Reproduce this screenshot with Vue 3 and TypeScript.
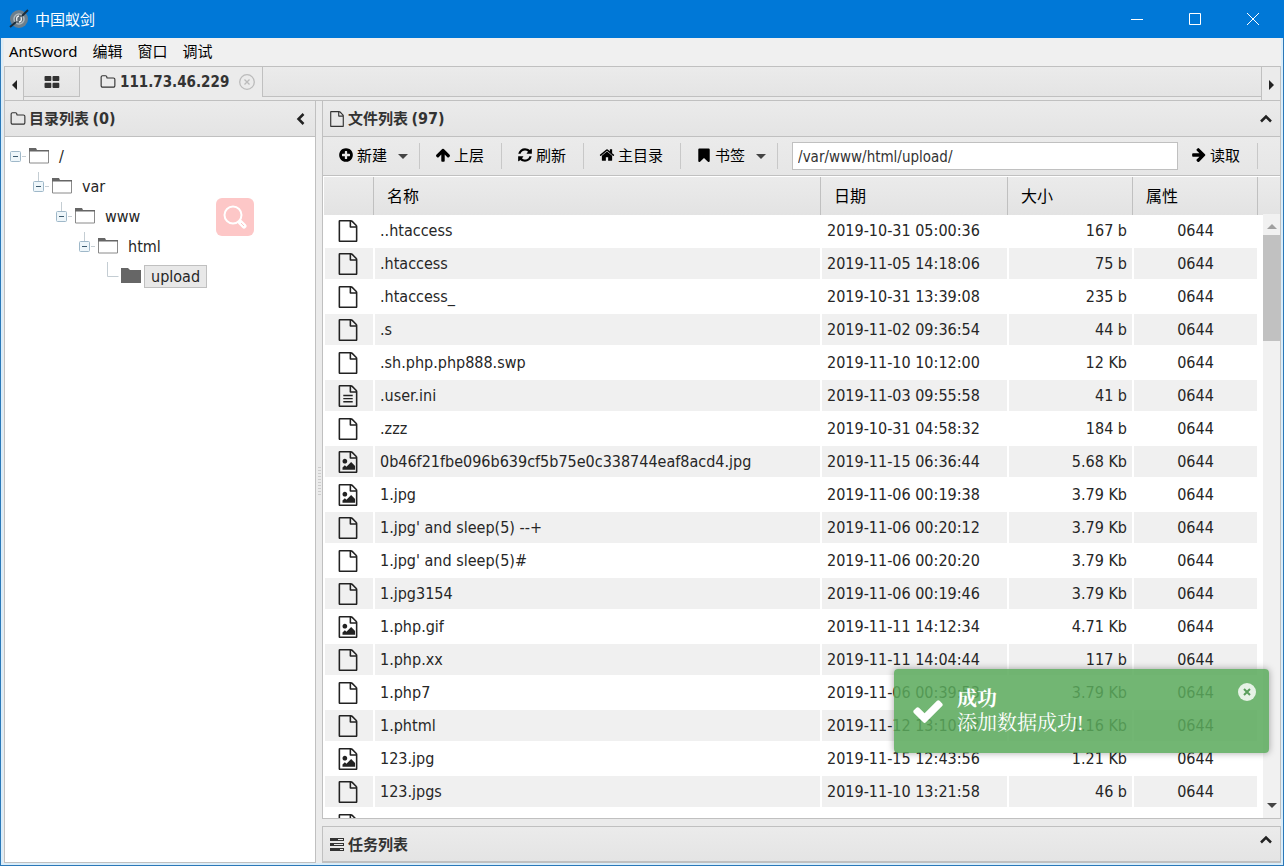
<script setup lang="ts">
import { ref } from 'vue'

type Kind = 'file' | 'text' | 'image'
interface Entry { name: string; date: string; size: string; kind: Kind }

const fileShape = 'M1596 380q28 28 48 76t20 88v1152q0 40-28 68t-68 28h-1344q-40 0-68-28t-28-68v-1600q0-40 28-68t68-28h896q40 0 88 20t76 48zm-444-244v376h376q-10-29-22-41l-313-313q-12-12-41-22zm384 1528v-1024h-416q-40 0-68-28t-28-68v-416h-768v1536h1280z'
const icons: Record<string, string> = {
  file: fileShape,
  text: fileShape + 'M512 800h768v112h-768zM512 1056h768v112h-768zM512 1312h768v112h-768z',
  image: fileShape + 'M1472 1216v320h-1024v-192l192-192 128 128 384-384zm-832-192q-80 0-136-56t-56-136 56-136 136-56 136 56 56 136-56 136-136 56z',
  folder: 'M1600 1312v-704q0-40-28-68t-68-28h-704q-40 0-68-28t-28-68v-64q0-40-28-68t-68-28h-320q-40 0-68 28t-28 68v960q0 40 28 68t68 28h1216q40 0 68-28t28-68zm128-704v704q0 92-66 158t-158 66h-1216q-92 0-158-66t-66-158v-960q0-92 66-158t158-66h320q92 0 158 66t66 158v32h672q92 0 158 66t66 158z',
  plus: 'M1344 960v-128q0-26-19-45t-45-19h-256v-256q0-26-19-45t-45-19h-128q-26 0-45 19t-19 45v256h-256q-26 0-45 19t-19 45v128q0 26 19 45t45 19h256v256q0 26 19 45t45 19h128q26 0 45-19t19-45v-256h256q26 0 45-19t19-45zm320-64q0 209-103 385.5t-279.5 279.5-385.5 103-385.5-103-279.5-279.5-103-385.5 103-385.5 279.5-279.5 385.5-103 385.5 103 279.5 279.5 103 385.5z',
  up: 'M1675 971q0 51-37 90l-75 75q-38 38-91 38-54 0-90-38l-294-293v704q0 52-37.5 84.5t-90.5 32.5h-128q-53 0-90.5-32.5t-37.5-84.5v-704l-294 293q-36 38-90 38t-90-38l-75-75q-38-38-38-90 0-53 38-91l651-651q35-37 90-37 54 0 91 37l651 651q37 39 37 91z',
  refresh: 'M1639 1056q0 5-1 7-64 268-268 434.5t-478 166.5q-146 0-282.5-55t-243.5-157l-129 129q-19 19-45 19t-45-19-19-45v-448q0-26 19-45t45-19h448q26 0 45 19t19 45-19 45l-137 137q71 66 161 102t187 36q134 0 250-65t186-179q11-17 53-117 8-23 30-23h192q13 0 22.5 9.5t9.5 22.5zm25-800v448q0 26-19 45t-45 19h-448q-26 0-45-19t-19-45 19-45l138-138q-148-137-349-137-134 0-250 65t-186 179q-11 17-53 117-8 23-30 23h-199q-13 0-22.5-9.5t-9.5-22.5v-7q65-268 270-434.5t480-166.5q146 0 284 55.5t245 156.5l130-129q19-19 45-19t45 19 19 45z',
  home: 'M1472 992v480q0 26-19 45t-45 19h-384v-384h-256v384h-384q-26 0-45-19t-19-45v-480q0-1 .5-3t.5-3l575-474 575 474q1 2 1 6zm223-69l-62 74q-8 9-21 11h-3q-13 0-21-7l-692-577-692 577q-12 8-24 7-13-2-21-11l-62-74q-8-10-7-23.5t11-21.5l719-599q32-26 76-26t76 26l244 204v-195q0-14 9-23t23-9h192q14 0 23 9t9 23v408l219 182q10 8 11 21.5t-7 23.5z',
  bookmark: 'M256 290q0-130 120-130h1040q120 0 120 130v1290q0 110-110 110-50 0-90-40l-440-424-440 424q-40 40-90 40-110 0-110-110z',
  check: 'M1671 566q0 40-28 68l-724 724-136 136q-28 28-68 28t-68-28l-136-136-362-362q-28-28-28-68t28-68l136-136q28-28 68-28t68 28l294 295 656-657q28-28 68-28t68 28l136 136q28 28 28 68z',
  grid: 'M60 310q0-100 100-100h560q100 0 100 100v370q0 100-100 100h-560q-100 0-100-100zM954 310q0-100 100-100h560q100 0 100 100v370q0 100-100 100h-560q-100 0-100-100zM60 1092q0-100 100-100h560q100 0 100 100v370q0 100-100 100h-560q-100 0-100-100zM954 1092q0-100 100-100h560q100 0 100 100v370q0 100-100 100h-560q-100 0-100-100z'
}

const menus = ['AntSword', '编辑', '窗口', '调试']
const tree = ['/', 'var', 'www', 'html']
const tools = [
  { icon: 'plus', label: '新建', drop: true },
  { icon: 'up', label: '上层', drop: false },
  { icon: 'refresh', label: '刷新', drop: false },
  { icon: 'home', label: '主目录', drop: false },
  { icon: 'bookmark', label: '书签', drop: true }
]
const path = ref('/var/www/html/upload/')
const toastOpen = ref(true)

const f = (name: string, date: string, size: string, kind: Kind = 'file'): Entry => ({ name, date, size, kind })
const files: Entry[] = [
  f('..htaccess', '2019-10-31 05:00:36', '167 b'),
  f('.htaccess', '2019-11-05 14:18:06', '75 b'),
  f('.htaccess_', '2019-10-31 13:39:08', '235 b'),
  f('.s', '2019-11-02 09:36:54', '44 b'),
  f('.sh.php.php888.swp', '2019-11-10 10:12:00', '12 Kb'),
  f('.user.ini', '2019-11-03 09:55:58', '41 b', 'text'),
  f('.zzz', '2019-10-31 04:58:32', '184 b'),
  f('0b46f21fbe096b639cf5b75e0c338744eaf8acd4.jpg', '2019-11-15 06:36:44', '5.68 Kb', 'image'),
  f('1.jpg', '2019-11-06 00:19:38', '3.79 Kb', 'image'),
  f("1.jpg' and sleep(5) --+", '2019-11-06 00:20:12', '3.79 Kb'),
  f("1.jpg' and sleep(5)#", '2019-11-06 00:20:20', '3.79 Kb'),
  f('1.jpg3154', '2019-11-06 00:19:46', '3.79 Kb'),
  f('1.php.gif', '2019-11-11 14:12:34', '4.71 Kb', 'image'),
  f('1.php.xx', '2019-11-11 14:04:44', '117 b'),
  f('1.php7', '2019-11-06 00:39:53', '3.79 Kb'),
  f('1.phtml', '2019-11-12 13:10:32', '1.16 Kb'),
  f('123.jpg', '2019-11-15 12:43:56', '1.21 Kb', 'image'),
  f('123.jpgs', '2019-11-10 13:21:58', '46 b')
]
</script>

<template>
  <div class="window">
    <header class="titlebar">
      <svg class="logo" viewBox="0 0 20 20" aria-hidden="true">
        <circle cx="10" cy="10" r="9" fill="#6d7f8c" />
        <circle cx="10" cy="10" r="5" fill="#5f6b74" stroke="#aeb9c0" stroke-width="1.5" />
        <path d="M1 18L7 13M13 7l6-6" stroke="#1c2c3a" stroke-width="2" />
        <path d="M8 12c-1-3 0-5 2-5M12 8c1 3 0 5-2 5" stroke="#eef3f6" stroke-width="1.3" fill="none" />
      </svg>
      <span class="app-name">中国蚁剑</span>
      <div class="win-buttons">
        <button aria-label="最小化"><svg viewBox="0 0 12 12"><path d="M0 6.500h12" /></svg></button>
        <button aria-label="最大化"><svg viewBox="0 0 12 12"><path d="M.5.5h11v11H.5z" /></svg></button>
        <button aria-label="关闭"><svg viewBox="0 0 12 12"><path d="M0 0l12 12M12 0L0 12" /></svg></button>
      </div>
    </header>

    <div class="frame">
      <nav class="menubar">
        <button v-for="m in menus" :key="m">{{ m }}</button>
      </nav>

      <div class="tabs">
        <button class="tab-arrow" aria-label="向左"><i class="tri left"></i></button>
        <div class="tab-strip">
          <button class="tab home" aria-label="主页"><svg class="ic" viewBox="0 0 1792 1792"><path :d="icons.grid" /></svg></button>
          <div class="tab active">
            <svg class="ic" viewBox="0 0 1792 1792"><path :d="icons.folder" /></svg>
            <span>111.73.46.229</span>
            <button class="tab-close" aria-label="关闭标签">
              <svg viewBox="0 0 16 16"><circle cx="8" cy="8" r="7.300" /><path d="M5.500 5.500l5 5M10.500 5.500l-5 5" /></svg>
            </button>
          </div>
          <div class="tab-rest"></div>
        </div>
        <button class="tab-arrow" aria-label="向右"><i class="tri right"></i></button>
      </div>

      <main class="panes">
        <section class="pane side">
          <div class="pane-head">
            <svg class="ic" viewBox="0 0 1792 1792"><path :d="icons.folder" /></svg>
            <h2>目录列表 <b>(0)</b></h2>
            <button class="fold" aria-label="折叠"><svg viewBox="0 0 12 12"><path d="M8.500 1L3.500 6l5 5" /></svg></button>
          </div>
          <ul class="tree">
            <li v-for="(n, i) in tree" :key="n" :class="'level' + i">
              <span class="joint">
                <svg viewBox="0 0 18 30" aria-hidden="true">
                  <path v-if="i > 0" d="M5.500 1v10" class="guide" />
                  <path d="M12 15.500h4" class="guide" />
                  <rect x=".5" y="10.500" width="10" height="10" rx="1" class="box" />
                  <path d="M3 15.500h5" class="minus" />
                </svg>
              </span>
              <svg class="dir" viewBox="0 0 20 16" aria-hidden="true">
                <path d="M.5 2.500h19v12.500H.5z" fill="#fff" stroke="#8a8a8a" />
                <path d="M0 3.500V0h7l1 2h12v1.500z" fill="#666" />
              </svg>
              <span class="node">{{ n }}</span>
            </li>
            <li class="level4">
              <span class="joint">
                <svg viewBox="0 0 18 30" aria-hidden="true"><path d="M5.500 1v14.500h11" class="guide" /></svg>
              </span>
              <svg class="dir" viewBox="0 0 20 16" aria-hidden="true"><path d="M0 15V0h7l2 2h11v13z" fill="#666" /></svg>
              <span class="node picked">upload</span>
            </li>
          </ul>
          <button class="search" aria-label="搜索">
            <svg viewBox="0 0 24 24"><circle cx="10" cy="10" r="8.500" /><path d="M17.500 17.500l3.500 3.500" class="grip" /><path d="M18 18l3 3" class="grip-core" /></svg>
          </button>
        </section>

        <div class="splitter"><i></i></div>

        <div class="main-col">
          <section class="pane files">
            <div class="pane-head">
              <svg class="ic" viewBox="0 0 1792 1792"><path :d="icons.file" /></svg>
              <h2>文件列表 <b>(97)</b></h2>
              <button class="fold" aria-label="折叠"><svg viewBox="0 0 12 12"><path d="M1 8.500l5-5 5 5" /></svg></button>
            </div>
            <div class="toolbar">
              <button v-for="t in tools" :key="t.label" class="tool">
                <svg class="ic" viewBox="0 0 1792 1792"><path :d="icons[t.icon]" /></svg>
                <span>{{ t.label }}</span>
                <i v-if="t.drop" class="tri down"></i>
              </button>
              <input v-model="path" class="path" aria-label="路径" />
              <button class="tool read">
                <svg class="ic turned" viewBox="0 0 1792 1792"><path :d="icons.up" /></svg>
                <span>读取</span>
              </button>
            </div>
            <div class="grid">
              <table>
                <colgroup>
                  <col class="c-icon" /><col /><col class="c-date" /><col class="c-size" /><col class="c-attr" /><col class="c-bar" />
                </colgroup>
                <thead>
                  <tr><th></th><th>名称</th><th>日期</th><th>大小</th><th>属性</th><th></th></tr>
                </thead>
                <tbody>
                  <tr v-for="e in files" :key="e.name">
                    <td class="kind"><svg viewBox="0 0 1792 1792"><path :d="icons[e.kind]" /></svg></td>
                    <td>{{ e.name }}</td>
                    <td>{{ e.date }}</td>
                    <td class="size">{{ e.size }}</td>
                    <td class="attr">0644</td>
                    <td class="bar-gap"></td>
                  </tr>
                  <tr>
                    <td class="kind"><svg viewBox="0 0 1792 1792"><path :d="icons.file" /></svg></td>
                    <td></td><td></td><td></td><td></td><td class="bar-gap"></td>
                  </tr>
                </tbody>
              </table>
              <div class="scrollbar">
                <i class="tri up"></i>
                <div class="thumb"></div>
                <i class="tri down"></i>
              </div>
            </div>
          </section>

          <section class="pane tasks">
            <div class="pane-head">
              <svg class="ic" viewBox="0 0 16 16">
                <path d="M1 2h14v3H1zM1 7h14v3H1zM1 12h14v3H1z" />
                <path d="M9 3h5v1H9zM5 8h9v1H5zM11 13h3v1h-3z" fill="#e8e8e8" />
              </svg>
              <h2>任务列表</h2>
              <button class="fold" aria-label="展开"><svg viewBox="0 0 12 12"><path d="M1 8.500l5-5 5 5" /></svg></button>
            </div>
          </section>
        </div>
      </main>
    </div>

    <div v-if="toastOpen" class="toast" role="status">
      <svg class="tick" viewBox="0 0 1792 1792"><path :d="icons.check" /></svg>
      <div class="toast-text">
        <strong>成功</strong>
        <span>添加数据成功!</span>
      </div>
      <button class="toast-close" aria-label="关闭提示" @click="toastOpen = false">
        <svg viewBox="0 0 18 18"><circle cx="9" cy="9" r="9" /><path d="M6 6l6 6M12 6l-6 6" /></svg>
      </button>
    </div>
  </div>
</template>

<style>
html, body { margin: 0; background: #eee; }
</style>

<style scoped>
* { box-sizing: border-box; }
.window {
  height: 100vh;
  display: flex;
  flex-direction: column;
  position: relative;
  overflow: hidden;
  font: 16px/20px "DejaVu Sans Condensed", "Noto Sans", "Noto Sans CJK SC", sans-serif;
  color: #262626;
}
button { border: 0; padding: 0; margin: 0; background: none; font: inherit; color: inherit; }
svg { display: block; flex: none; }
.ic { width: 16px; height: 16px; fill: currentColor; }

.titlebar {
  flex: none;
  height: 38px;
  display: flex;
  align-items: center;
  padding: 0 2px 0 9px;
  background: #0078d7;
  color: #fff;
  font: 15px/20px "Noto Sans CJK SC", sans-serif;
}
.logo { width: 20px; height: 20px; margin-right: 6px; }
.win-buttons { margin-left: auto; display: flex; }
.win-buttons button { width: 58px; height: 38px; display: grid; place-items: center; }
.win-buttons svg { width: 12px; height: 12px; fill: none; stroke: #fff; stroke-width: 1; overflow: visible; }

.frame {
  flex: 1;
  min-height: 0;
  display: flex;
  flex-direction: column;
  padding: 0 2px 2px 3px;
  background: #ebebeb;
  border: 1px solid #2b78b8;
  border-top: 0;
  box-shadow: inset 2px 0 #d9edfa, inset -2px -2px #d9edfa;
}
.menubar {
  flex: none;
  height: 28px;
  display: flex;
  align-items: center;
  gap: 15px;
  padding: 0 0 2px 5px;
  background: #f0f0f0;
  color: #000;
  font: 15px/20px "Noto Sans", "Noto Sans CJK SC", sans-serif;
}

.tabs { flex: none; display: flex; height: 35px; border: 1px solid #c0c0c0; background: #ebebeb; }
.tab-arrow { width: 19px; display: grid; place-items: center; padding-top: 2px; border-right: 1px solid #c0c0c0; background: #ebebeb; }
.tab-arrow:last-child { border-right: 0; border-left: 1px solid #c0c0c0; }
.tri { width: 0; height: 0; border: 5px solid transparent; }
.tri.left { border-left: 0; border-right-color: #222; }
.tri.right { border-right: 0; border-left-color: #222; }
.tri.down { border-bottom: 0; border-top-color: #444; }
.tri.up { border-top: 0; border-bottom-color: #a0a0a0; }
.tab-strip { flex: 1; display: flex; height: 30px; }
.tab { border-right: 1px solid #c0c0c0; display: flex; align-items: center; }
.tab.home { width: 56px; justify-content: center; border-bottom: 1px solid #c0c0c0; background: linear-gradient(#ebebeb, #e4e4e4); color: #333; }
.tab.active { gap: 4px; padding: 0 7px 0 20px; font-size: 15px; font-weight: bold; color: #333; }
.tab-close { margin-left: 6px; }
.tab-close svg { width: 16px; height: 16px; fill: none; stroke: #bbb; stroke-width: 1.3; }
.tab-rest { flex: 1; border-bottom: 1px solid #c0c0c0; background: linear-gradient(#ebebeb, #e4e4e4); }

.panes { flex: 1; min-height: 0; display: flex; }
.pane { border: 1px solid #c0c0c0; border-top: 0; background: #fff; }
.side { width: 312px; flex: none; position: relative; }
.pane-head {
  display: flex;
  align-items: center;
  height: 36px;
  padding: 0 8px 0 5px;
  border-bottom: 1px solid #c0c0c0;
  background: linear-gradient(#ebebeb, #e4e4e4);
  color: #333;
}
.pane-head .ic { margin-right: 3px; }
h2 { margin: 0; font: bold 15px/20px "Noto Sans CJK SC", sans-serif; }
h2 b { font: bold 16px/20px "DejaVu Sans Condensed", sans-serif; }
.fold { margin-left: auto; }
.fold svg { width: 12px; height: 12px; fill: none; stroke: #222; stroke-width: 2.5; }

.tree { list-style: none; margin: 0; padding: 4px 0 0 5px; }
.tree li { display: flex; align-items: center; height: 30px; }
.level1 { padding-left: 23px; }
.level2 { padding-left: 46px; }
.level3 { padding-left: 69px; }
.level4 { padding-left: 92px; }
.joint svg { width: 18px; height: 30px; fill: none; }
.guide { stroke: #c4cdd3; }
.box { fill: #eef6fa; stroke: #9fb8c9; }
.minus { stroke: #3c5a6e; }
.dir { width: 20px; height: 16px; margin-left: 1px; }
.node { margin-left: 3px; padding: 0 6px; line-height: 21px; border: 1px solid transparent; }
.picked { background: #e8e8e8; border-color: #c0c0c0; }
.search {
  position: absolute;
  left: 211px;
  top: 97px;
  width: 38px;
  height: 38px;
  display: grid;
  place-items: center;
  border-radius: 6px;
  background: #fdc7c7;
}
.search svg { width: 24px; height: 24px; fill: none; stroke: #fff; stroke-width: 2; }
.search .grip { stroke-width: 5; stroke-linecap: round; }
.search .grip-core { stroke: #fdc7c7; stroke-width: 1; }

.splitter { width: 6px; flex: none; display: grid; place-items: center; background: #ebebeb; }
.splitter i { width: 3px; height: 30px; background: repeating-linear-gradient(#ccc 0 1px, #ebebeb 1px 3px); }
.main-col { flex: 1; min-width: 0; display: flex; flex-direction: column; gap: 7px; }
.files { flex: 1; min-height: 0; display: flex; flex-direction: column; }
.files .pane-head, .toolbar { flex: none; }
.tasks { flex: none; border-top: 1px solid #c0c0c0; }
.tasks .pane-head { height: 35px; }
.tasks .fold { padding-bottom: 8px; }
.pane.files .pane-head, .pane.tasks .pane-head { padding-left: 6px; }

.toolbar {
  display: flex;
  align-items: center;
  height: 39px;
  border-bottom: 1px solid #c0c0c0;
  background: linear-gradient(#ebebeb, #e6e6e6);
  color: #000;
  font: 15px/20px "Noto Sans CJK SC", sans-serif;
}
.tool { height: 26px; display: flex; align-items: center; gap: 3px; padding: 0 17px 2px 15px; border-right: 1px solid #c8c8c8; }
.tool .tri { margin: 2px -6px 0 8px; }
.turned { transform: rotate(90deg); }
.path {
  flex: 1;
  min-width: 0;
  height: 28px;
  margin-left: 14px;
  padding: 1px 5px 0;
  border: 1px solid #c0c0c0;
  border-radius: 0;
  outline: 0;
  background: #fff;
  color: #333;
  font: 15px/20px "DejaVu Sans Condensed", sans-serif;
}
.read { margin-right: 22px; padding-left: 13px; }

.grid { flex: 1; min-height: 0; overflow: hidden; position: relative; padding: 1px 0 0 1px; }
table { width: 100%; table-layout: fixed; border-collapse: separate; border-spacing: 0; }
.c-icon { width: 50px; }
.c-date { width: 187px; }
.c-size { width: 125px; }
.c-attr { width: 125px; }
.c-bar { width: 22px; }
th {
  height: 38px;
  padding: 0 13px 2px;
  text-align: left;
  font: 16px/20px "Noto Sans CJK SC", sans-serif;
  color: #000;
  border-right: 1px solid #c0c0c0;
  background: linear-gradient(#ebebeb, #e3e3e3);
}
th:last-child { border-right: 0; }
td {
  height: 33px;
  padding: 1px 5px 0;
  border: solid #fff;
  border-width: 0 1px 2px;
  white-space: nowrap;
}
tr:nth-child(even) td { background: #f0f0f0; }
tbody tr td.bar-gap { background: #fff; }
.kind { padding: 0 0 0 12px; }
.kind svg { width: 22px; height: 22px; fill: #222; }
.size { text-align: right; }
.attr { text-align: center; }
.scrollbar {
  position: absolute;
  top: 38px;
  right: 0;
  bottom: 0;
  width: 17px;
  display: flex;
  flex-direction: column;
  align-items: center;
  padding: 10px 0;
  background: #f1f1f1;
}
.thumb { width: 17px; height: 106px; margin-top: 6px; background: #c1c1c1; }
.scrollbar .down { margin-top: auto; }

.toast {
  position: absolute;
  right: 15px;
  bottom: 113px;
  width: 375px;
  height: 84px;
  display: flex;
  align-items: center;
  padding-left: 17px;
  border-radius: 4px;
  background: rgba(91, 170, 92, 0.86);
  box-shadow: 0 0 7px rgba(0, 0, 0, 0.35);
  color: #fff;
  font: 20px/24px "Liberation Serif", "Noto Serif CJK SC", "Noto Sans CJK SC", serif;
}
.tick { width: 34px; height: 34px; fill: #fff; }
.toast-text { display: flex; flex-direction: column; margin-left: 12px; }
.toast-close { position: absolute; right: 13px; top: 14px; }
.toast-close svg { width: 18px; height: 18px; fill: #e6f2e6; }
.toast-close path { stroke: #5a9e5c; stroke-width: 2; }
</style>
